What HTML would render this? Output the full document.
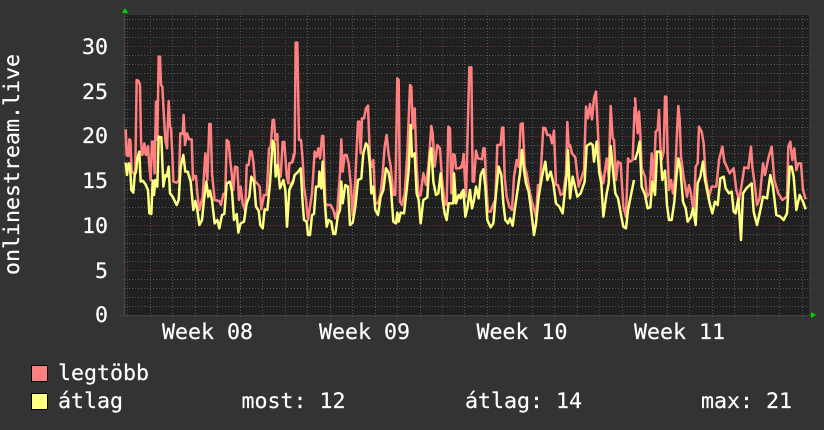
<!DOCTYPE html>
<html>
<head>
<meta charset="utf-8">
<style>
html,body{margin:0;padding:0;background:#333;width:824px;height:430px;overflow:hidden}
svg{display:block}
text{font-family:"DejaVu Sans Mono","Liberation Mono",monospace;font-size:21.6px;fill:#fff;stroke:#fff;stroke-width:.2px;white-space:pre}
.a{fill:none;stroke-linejoin:round;stroke-width:7.5}
</style>
</head>
<body>
<svg width="824" height="430" viewBox="0 0 824 430" xmlns="http://www.w3.org/2000/svg">
<rect width="824" height="430" fill="#333"/>
<rect x="124" y="15" width="685" height="301" fill="#202020"/>
<rect x="124" y="15" width="2" height="301" fill="#2b2b2b"/>
<path fill="none" stroke="#585858" stroke-width="1" stroke-dasharray="1 2" d="M123 306.5H811M123 297.5H811M123 288.5H811M123 279.5H811M123 261.5H811M123 252.5H811M123 243.5H811M123 234.5H811M123 216.5H811M123 207.5H811M123 198.5H811M123 189.5H811M123 171.5H811M123 162.5H811M123 153.5H811M123 145.5H811M123 127.5H811M123 118.5H811M123 109.5H811M123 100.5H811M123 82.5H811M123 73.5H811M123 64.5H811M123 55.5H811M123 37.5H811M123 28.5H811M123 19.5H811"/>
<path fill="none" stroke="#585858" stroke-width="1" stroke-dasharray="1 2" d="M150.5 13V317M172.5 13V317M195.5 13V317M217.5 13V317M240.5 13V317M262.5 13V317M307.5 13V317M330.5 13V317M352.5 13V317M375.5 13V317M397.5 13V317M420.5 13V317M464.5 13V317M487.5 13V317M509.5 13V317M532.5 13V317M554.5 13V317M577.5 13V317M622.5 13V317M644.5 13V317M667.5 13V317M689.5 13V317M712.5 13V317M734.5 13V317M779.5 13V317M802.5 13V317"/>
<path fill="none" stroke="#6a3a38" stroke-width="1" stroke-dasharray="1 2" d="M123 270.5H811M123 225.5H811M123 180.5H811M123 136.5H811M123 91.5H811M123 46.5H811M127.5 13V317M285.5 13V317M442.5 13V317M599.5 13V317M757.5 13V317"/>
<path fill="none" stroke="#444" stroke-width="1" d="M124.5 13V316M120 315.5H811"/>

<g transform="translate(120,40) scale(.33333)">
<polyline class="a" stroke="#ff8080" points="17,268 20,345 25,348 28,298 31,300 35,395 42,400 46,390 50,120 55,122 60,135 63,300 66,345 70,340 73,310 78,345 84,318 88,380 92,420 96,305 100,305 104,400 108,185 112,300 116,50 120,50 123,135 127,140 131,215 136,300 141,325 146,183 150,260 153,265 157,345 160,425 170,428 177,420 181,280 188,282 191,225 195,315 201,280 207,298 215,298 219,420 224,408 228,408 232,460 238,510 243,490 248,470 256,340 262,420 268,252 272,252 276,400 284,480 292,482 298,483 303,495 310,462 316,460 320,300 326,305 330,355 335,400 340,450 345,380 352,382 357,480 362,440 368,490 376,515 380,375 386,375 391,333 395,335 400,365 405,425 412,430 419,440 424,508 432,465 440,465 447,325 452,320 458,240 462,240 466,300 472,282 476,400 482,410 488,306 493,306 500,405 505,430 508,370 516,368 522,340"/>
</g>
<g transform="translate(290,40) scale(.33333)">
<polyline class="a" stroke="#ff8080" points="0,370 8,365 14,340 17,8 22,8 27,300 33,300 38,360 42,440 48,480 54,540 60,500 66,460 74,335 80,350 85,325 90,355 96,288 100,288 106,490 112,495 122,495 130,510 136,535 142,510 150,400 154,298 158,395 164,345 170,345 176,370 182,430 188,525 196,415 204,245 208,245 212,340 216,235 222,235 228,205 234,197 240,360 246,380 250,360 256,490 264,490 272,460 278,400 284,320 290,285 296,345 302,378 310,465 316,465 322,115 326,120 330,485 336,495 344,460 352,340 360,135 364,140 368,265 374,205 380,380 386,470 392,465 400,400 408,435 416,370 424,258 428,280 434,380 442,315 450,325 456,415 464,490 470,495 475,260 480,265 484,460 490,342 494,345 498,385 508,385 516,375 522,342"/>
</g>
<g transform="translate(460,60) scale(.33333)">
<polyline class="a" stroke="#ff8080" points="0,325 8,320 11,282 14,345 18,410 28,22 34,22 38,365 42,365 48,272 54,295 66,298 70,265 74,265 78,360 84,455 92,455 100,432 106,420 112,255 122,255 126,203 130,203 134,350 140,410 148,440 156,450 162,350 170,300 176,320 182,192 188,190 194,320 200,340 210,400 220,440 228,470 234,375 240,380 246,270 250,203 256,205 262,225 270,225 276,250 282,212 288,375 294,375 302,405 310,400 318,340 322,186 326,260 330,255 336,280 346,292 356,380 372,330 378,140 384,175 390,132 396,178 402,115 408,95 414,220 420,330 430,370 440,295 446,350 452,138 458,235 462,240 468,360 474,305 482,310 490,440 498,470 504,295 510,305 518,300 524,140"/>
</g>
<g transform="translate(635,80) scale(.33333)">
<polyline class="a" stroke="#ff8080" points="0,52 8,160 12,95 16,160 20,265 30,290 36,350 44,340 50,220 56,310 62,155 68,150 72,90 76,200 80,240 86,215 90,50 94,50 98,230 102,330 108,300 114,340 120,295 126,160 130,78 134,120 138,230 146,290 156,350 162,315 168,340 176,400 182,260 188,250 192,140 200,155 206,190 212,290 222,350 230,320 244,320 252,240 262,200 268,245 276,262 284,280 296,265 304,330 312,360 320,315 328,262 340,265 348,200 352,260 360,320 366,375 374,355 384,250 390,285 400,235 410,200 418,300 430,340 442,360 456,350 460,200 466,185 472,240 478,205 484,270 490,250 498,250 504,330 512,358"/>
</g>

<g transform="translate(120,40) scale(.33333)">
<polyline class="a" stroke="#ffff80" points="17,368 21,405 26,370 30,375 34,450 40,458 44,405 48,395 52,355 58,335 62,425 68,422 76,432 84,450 88,520 94,522 98,422 102,465 106,420 112,440 116,290 124,292 130,440 136,405 140,410 146,380 150,460 158,470 170,495 176,480 182,380 190,345 196,395 203,395 212,425 220,510 226,483 232,510 238,555 246,540 252,480 259,425 265,470 270,452 276,480 284,550 292,540 298,565 306,525 313,522 320,430 330,425 336,455 342,540 350,522 355,578 362,550 372,545 380,490 388,470 394,410 402,425 408,500 416,512 421,555 428,565 434,508 442,510 450,430 458,302 463,310 467,410 473,375 480,445 490,420 496,450 501,560 508,450 515,430 522,420"/>
</g>
<g transform="translate(290,40) scale(.33333)">
<polyline class="a" stroke="#ffff80" points="0,445 8,430 14,405 22,398 32,385 38,490 42,540 50,545 54,585 60,585 66,525 72,522 78,440 86,440 88,395 94,445 98,365 104,480 110,560 116,540 124,545 130,582 136,582 144,525 150,510 154,425 158,490 166,435 174,440 180,555 188,548 196,500 204,420 214,415 220,340 228,310 234,320 240,380 244,460 250,440 256,510 264,525 272,470 280,450 288,385 296,398 302,435 310,545 318,550 322,518 326,545 332,518 342,520 350,450 356,390 362,255 366,350 374,340 380,460 386,480 392,550 400,480 412,472 420,340 424,325 430,425 438,465 445,460 452,400 458,480 464,520 470,540 476,490 490,490 492,400 498,490 506,465 512,475 520,450 524,470"/>
</g>
<g transform="translate(460,60) scale(.33333)">
<polyline class="a" stroke="#ffff80" points="0,410 6,395 12,415 16,470 22,445 30,390 36,445 42,420 48,380 56,415 62,345 70,328 76,380 82,480 92,502 100,490 108,400 116,320 124,345 130,430 136,480 144,490 150,475 158,497 164,450 172,395 180,340 186,270 192,330 198,370 206,395 214,455 222,525 228,490 236,410 246,350 256,305 262,360 272,335 280,370 288,430 298,440 308,460 314,400 320,345 324,270 330,415 338,350 344,375 352,410 362,400 374,365 380,258 392,250 398,255 402,305 410,245 418,340 424,370 430,470 440,400 446,370 452,258 460,340 466,400 474,415 484,470 490,500 498,505 504,450 514,400 522,360"/>
</g>
<g transform="translate(635,80) scale(.33333)">
<polyline class="a" stroke="#ffff80" points="0,240 8,215 14,185 20,320 30,345 38,385 46,382 52,305 60,345 66,215 76,215 82,300 90,272 96,375 102,420 110,420 118,365 124,290 130,235 136,265 144,365 152,385 158,425 168,410 174,385 182,435 188,310 196,290 204,245 210,300 218,340 224,370 232,400 240,365 248,375 256,295 266,290 272,325 282,340 290,335 296,395 302,400 310,355 318,480 324,340 334,325 350,310 356,395 366,435 374,400 384,350 396,355 406,285 414,320 424,405 436,410 446,420 456,400 464,260 470,260 476,290 484,390 494,345 504,365 512,388"/>
</g>

<polygon points="122,13 128,13 125,8" fill="#00d800"/>
<polygon points="811,312 811,318 816,315" fill="#00d800"/>

<text x="108" y="54" text-anchor="end">30</text>
<text x="108" y="99" text-anchor="end">25</text>
<text x="108" y="143" text-anchor="end">20</text>
<text x="108" y="188" text-anchor="end">15</text>
<text x="108" y="233" text-anchor="end">10</text>
<text x="108" y="278" text-anchor="end">5</text>
<text x="108" y="322" text-anchor="end">0</text>

<text x="162" y="339">Week 08</text>
<text x="319" y="339">Week 09</text>
<text x="476.5" y="339">Week 10</text>
<text x="634" y="339">Week 11</text>

<text transform="translate(19,275) rotate(-90)">onlinestream.live</text>

<rect x="31.5" y="365.5" width="16" height="16" fill="#ff8080" stroke="#000" stroke-width="1"/>
<rect x="31.5" y="393.5" width="16" height="16" fill="#ffff80" stroke="#000" stroke-width="1"/>
<text x="58" y="380">legtöbb</text>
<text x="58" y="408">átlag</text>
<text x="241.5" y="408">most: 12</text>
<text x="465" y="408">átlag: 14</text>
<text x="701" y="408">max: 21</text>
</svg>
</body>
</html>
